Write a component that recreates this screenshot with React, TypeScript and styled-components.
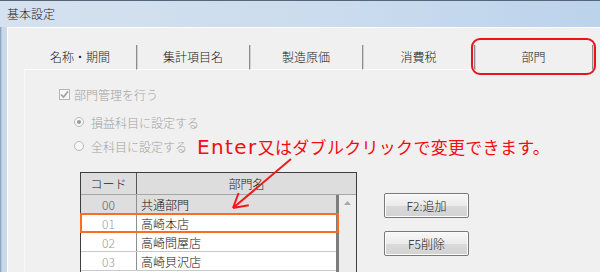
import React from 'react'
import styled, { createGlobalStyle } from 'styled-components'

const GlobalStyle = createGlobalStyle`
  html, body {
    margin: 0;
    padding: 0;
    background: #f0f0f0;
  }
  * {
    box-sizing: border-box;
  }
`

const UI_FONT = `"Noto Sans CJK JP", "Noto Sans", sans-serif`

const Window = styled.div`
  width: 600px;
  height: 272px;
  overflow: hidden;
  display: flex;
  flex-direction: column;
  font-family: ${UI_FONT};
  font-weight: 300;
  font-size: 12px;
`

const TitleBar = styled.div`
  height: 27px;
  flex: none;
  display: flex;
  align-items: center;
  padding: 0 0 1px 7px;
  border-top: 1px solid #55657a;
  background: linear-gradient(to right, #d5e1ee 0%, #cbdcee 55%, #bcd3ec 100%);
  color: #1b1b1b;
  font-size: 12px;
`

const Body = styled.div`
  flex: 1;
  display: flex;
  min-height: 0;
`

const FrameEdge = styled.div`
  width: 7px;
  flex: none;
  background: linear-gradient(to right, #8ea5c1 0 1px, #b4c8de 1px 2px, #c9d9eb 2px);
`

const Client = styled.div`
  flex: 1;
  display: flex;
  flex-direction: column;
  background: #f0f0f0;
  border-top: 1px solid #ffffff;
  border-left: 1px solid #ffffff;
  padding: 17px 0 0 16px;
  min-height: 0;
`

const TabStrip = styled.div`
  display: flex;
  height: 25px;
  flex: none;
`

const Tab = styled.div<{ $w: number; $active?: boolean }>`
  position: relative;
  width: ${(p) => p.$w}px;
  display: flex;
  align-items: center;
  justify-content: center;
  padding-bottom: 2px;
  color: #1a1a1a;
  font-size: 12px;
  border-right: 1px solid #8c8c8c;
  box-shadow: 1px 0 0 #cfcfcf;
  border-bottom: 1px solid ${(p) => (p.$active ? 'transparent' : '#fbfbfb')};
`

const TabMark = styled.div`
  position: absolute;
  left: -4px;
  right: -4px;
  top: -7px;
  bottom: -6px;
  border: 2px solid #e8141b;
  border-radius: 9px;
`

const Panel = styled.div`
  position: relative;
  flex: 1;
  display: flex;
  flex-direction: column;
  padding: 16px 0 0 34px;
  border-left: 1px solid #f8f8f8;
  min-height: 0;
`

const OptionRow = styled.div`
  display: flex;
  align-items: center;
  height: 16px;
  gap: 4px;
  color: #a2a2a2;
  font-size: 12px;
`

const RadioGroup = styled.div`
  display: flex;
  flex-direction: column;
  gap: 8px;
  margin: 12px 0 0 15px;
`

const CheckBox = styled.span`
  width: 11px;
  height: 11px;
  flex: none;
  border: 1px solid #b5b5b5;
  background: #f6f6f6;
  display: flex;
  align-items: center;
  justify-content: center;
`

const Radio = styled.span<{ $on?: boolean }>`
  width: 10px;
  height: 10px;
  flex: none;
  border-radius: 50%;
  border: 1px solid #b9b9b9;
  background: #f7f7f7;
  margin-right: 3px;
  display: flex;
  align-items: center;
  justify-content: center;

  &::after {
    content: '';
    width: 4px;
    height: 4px;
    border-radius: 50%;
    background: ${(p) => (p.$on ? '#9a9a9a' : 'transparent')};
  }
`

const Note = styled.div`
  position: absolute;
  left: 172px;
  top: 65px;
  color: #f10d12;
  font-size: 17px;
  font-weight: 400;
  line-height: 24px;
  letter-spacing: 0.3px;
  white-space: nowrap;
  font-family: ${UI_FONT};
`

const NoteLatin = styled.span`
  font-family: "DejaVu Sans", sans-serif;
  font-size: 20px;
  font-weight: 400;
  letter-spacing: 1.4px;
`

const Arrow = styled.svg`
  position: absolute;
  left: 198px;
  top: 82px;
`

const Lower = styled.div`
  display: flex;
  gap: 27px;
  margin: 18px 0 0 21px;
  flex: 1;
  min-height: 0;
`

const Grid = styled.div`
  width: 277px;
  flex: none;
  display: flex;
  flex-direction: column;
  border: 1px solid #3e3e3e;
  border-bottom: none;
`

const HeadRow = styled.div`
  display: grid;
  grid-template-columns: 56px 1fr;
  height: 22px;
  background: #dddddd;
  border-bottom: 1px solid #a6a6a6;
`

const HeadCell = styled.div<{ $first?: boolean }>`
  display: flex;
  align-items: center;
  justify-content: center;
  color: #222;
  font-size: 12px;
  border-right: ${(p) => (p.$first ? '1px solid #555' : 'none')};
`

const GridBody = styled.div`
  flex: 1;
  display: flex;
  min-height: 0;
`

const Rows = styled.div`
  width: 255px;
  display: flex;
  flex-direction: column;
  background: #ffffff;
`

const Row = styled.div<{ $shade?: boolean; $selected?: boolean }>`
  position: relative;
  display: grid;
  grid-template-columns: 56px 1fr;
  height: 19px;
  flex: none;
  background: ${(p) => (p.$shade ? '#dedede' : '#ffffff')};
  border-bottom: 1px solid #c9c9c9;

  ${(p) =>
    p.$selected &&
    `
    &::after {
      content: '';
      position: absolute;
      left: -1px;
      right: -3px;
      top: -1px;
      bottom: -1px;
      border: 2px solid #fa6d22;
      pointer-events: none;
    }
  `}
`

const CodeCell = styled.div<{ $dim?: boolean }>`
  display: flex;
  align-items: center;
  justify-content: center;
  color: ${(p) => (p.$dim ? '#9a9a9a' : '#5c5c5c')};
  font-size: 12px;
  border-right: 1px solid #8f8f8f;
`

const NameCell = styled.div`
  display: flex;
  align-items: center;
  padding-left: 4px;
  color: #111;
  font-size: 12px;
`

const ThickBar = styled.div`
  width: 3px;
  flex: none;
  background: #7d7d7d;
`

const ScrollTrack = styled.div`
  flex: 1;
  background: #ededed;
  display: flex;
  justify-content: center;
  padding-top: 6px;
`

const Buttons = styled.div`
  display: flex;
  flex-direction: column;
  gap: 13px;
  padding-top: 21px;
`

const Button = styled.button`
  width: 85px;
  height: 25px;
  border: 1px solid #7a7a7a;
  border-radius: 2px;
  background: linear-gradient(to bottom, #f8f8f8 0%, #ebebeb 50%, #dadada 51%, #d2d2d2 100%);
  box-shadow: inset 0 0 0 1px #fcfcfc;
  color: #1a1a1a;
  font-family: ${UI_FONT};
  font-weight: 300;
  font-size: 12px;
  padding: 0 0 1px;
`

const tabs = [
  { label: '名称・期間', w: 113 },
  { label: '集計項目名', w: 113 },
  { label: '製造原価', w: 113 },
  { label: '消費税', w: 112 },
  { label: '部門', w: 118, active: true },
]

const rows = [
  { code: '00', name: '共通部門', shade: true },
  { code: '01', name: '高崎本店', selected: true },
  { code: '02', name: '高崎問屋店' },
  { code: '03', name: '高崎貝沢店' },
]

export default function App() {
  return (
    <Window>
      <GlobalStyle />
      <TitleBar>基本設定</TitleBar>
      <Body>
        <FrameEdge />
        <Client>
          <TabStrip>
            {tabs.map((t) => (
              <Tab key={t.label} $w={t.w} $active={t.active}>
                {t.label}
                {t.active && <TabMark />}
              </Tab>
            ))}
          </TabStrip>

          <Panel>
            <OptionRow>
              <CheckBox>
                <svg width="9" height="9" viewBox="0 0 9 9">
                  <path d="M1 4.5 L3.5 7 L8 1.5" fill="none" stroke="#9c9c9c" strokeWidth="1.6" />
                </svg>
              </CheckBox>
              部門管理を行う
            </OptionRow>

            <RadioGroup>
              <OptionRow>
                <Radio $on />
                損益科目に設定する
              </OptionRow>
              <OptionRow>
                <Radio />
                全科目に設定する
              </OptionRow>
            </RadioGroup>

            <Lower>
              <Grid>
                <HeadRow>
                  <HeadCell $first>コード</HeadCell>
                  <HeadCell>部門名</HeadCell>
                </HeadRow>
                <GridBody>
                  <Rows>
                    {rows.map((r) => (
                      <Row key={r.code} $shade={r.shade} $selected={r.selected}>
                        <CodeCell $dim={!r.shade}>{r.code}</CodeCell>
                        <NameCell>{r.name}</NameCell>
                      </Row>
                    ))}
                  </Rows>
                  <ThickBar />
                  <ScrollTrack>
                    <svg width="7" height="4" viewBox="0 0 7 4">
                      <path d="M0 4 L3.5 0 L7 4 Z" fill="#a8a8a8" />
                    </svg>
                  </ScrollTrack>
                </GridBody>
              </Grid>

              <Buttons>
                <Button>F2:追加</Button>
                <Button>F5削除</Button>
              </Buttons>
            </Lower>

            <Note>
              <NoteLatin>Enter</NoteLatin>又はダブルクリックで変更できます。
            </Note>
            <Arrow width="80" height="60" viewBox="0 0 80 60">
              <path
                d="M68 7 L10 56 M10 56 L15.6 41 M10 56 L25.8 53.3"
                fill="none"
                stroke="#ee1b1b"
                strokeWidth="2"
              />
            </Arrow>
          </Panel>
        </Client>
      </Body>
    </Window>
  )
}
